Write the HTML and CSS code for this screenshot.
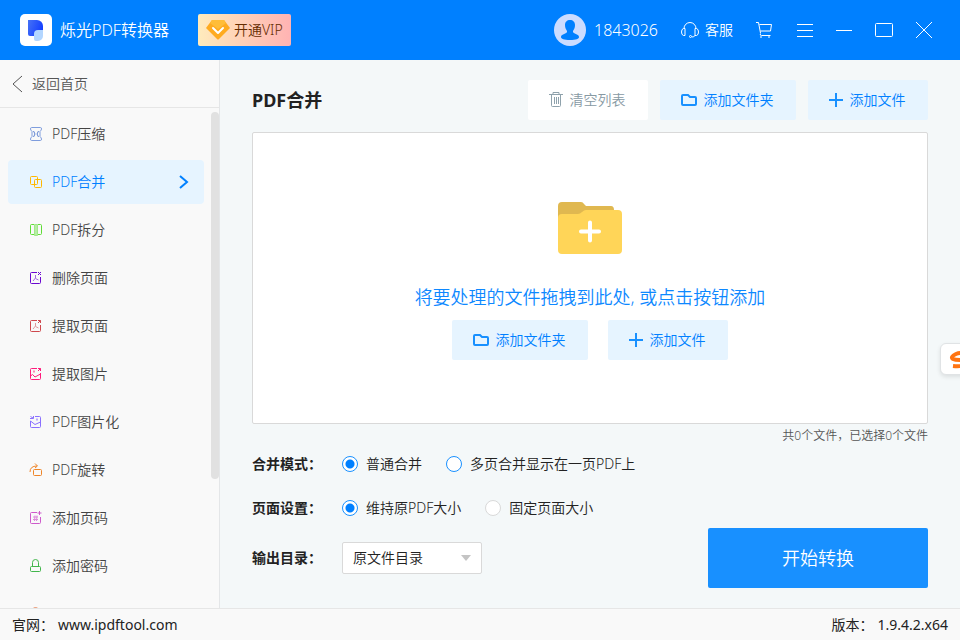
FILE: index.html
```html
<!DOCTYPE html>
<html lang="zh-CN">
<head>
    <meta charset="UTF-8">
    <meta name="viewport" content="width=device-width, initial-scale=1.0">
    <title>烁光PDF转换器</title>
    <link rel="stylesheet" href="styles.css">
</head>
<body>
    <header class="topbar">
        <svg class="logo" width="32" height="32" viewBox="0 0 32 32">
            <defs>
                <linearGradient id="logoBlue" x1="0" y1="0" x2="1" y2="0.4">
                    <stop offset="0" stop-color="#4672f5"/>
                    <stop offset="1" stop-color="#1440ff"/>
                </linearGradient>
            </defs>
            <rect width="32" height="32" rx="5" fill="#fff"/>
            <path d="M8 6h9a6 6 0 0 1 6 6v4a6 6 0 0 1-6 6H10a2 2 0 0 1-2-2z" fill="url(#logoBlue)"/>
            <path d="M14 20a4 4 0 0 1 4-4h5v6a5 5 0 0 1-5 5h-2a2 2 0 0 1-2-2z" fill="#b3d6ff"/>
        </svg>
        <span class="app-name">烁光PDF转换器</span>
        <button type="button" class="vip">
            <svg width="24" height="22" viewBox="0 0 24 22">
                <path d="M6 1h12l6 8-11 11q-1 1-2 0L0 9z" fill="#ffab1f"/>
                <path d="M6 1h12l2 3-8 6-8-6z" fill="#ffbd38"/>
                <path d="M7 9l5 5 5-5" fill="none" stroke="#fff" stroke-width="2" stroke-linecap="round" stroke-linejoin="round"/>
            </svg>
            开通VIP
        </button>
        <div class="top-actions">
            <a href="#" class="user">
                <svg width="32" height="32" viewBox="0 0 32 32">
                    <circle cx="16" cy="16" r="16" fill="#ccdcff"/>
                    <path d="M16 6c3 0 5 2 5 5 0 3-1 4-2 6v1c1 2 6 2 6 5 0 2-3 3-9 3s-9-1-9-3c0-3 5-3 6-5v-1c-1-2-2-3-2-6 0-3 2-5 5-5z" fill="#0080ff"/>
                </svg>
                1843026
            </a>
            <a href="#" class="service">
                <svg width="18" height="16" viewBox="0 0 18 16" fill="none" stroke="#fff" stroke-width="1">
                    <path d="M3 6.500a6 6 0 0 1 12 0M3 6.500H2.500Q.5 7 .5 10t2 3.500H4v-7zM15 6.500h.5q2 .5 2 3.500t-2 3.500H14v-7zM14 13.500q-1 1.500-3 1.500"/>
                    <circle cx="9.500" cy="14.500" r="1"/>
                </svg>
                客服
            </a>
            <button type="button" aria-label="购物车">
                <svg width="18" height="16" viewBox="0 0 18 16" fill="none" stroke="#fff">
                    <path d="M0 .5h2.500l2 10.500M3.500 2.500h12L14.500 9H4.500M4.500 11.500q-1 2 1 2h9"/>
                    <path d="M4 15h2M12 15h2"/>
                </svg>
            </button>
            <button type="button" aria-label="菜单">
                <svg width="16" height="16" viewBox="0 0 16 16" stroke="#fff"><path d="M0 2.500h16M0 8.500h16M0 14.500h16"/></svg>
            </button>
            <button type="button" aria-label="最小化">
                <svg width="16" height="16" viewBox="0 0 16 16" stroke="#fff"><path d="M0 8.500h16"/></svg>
            </button>
            <button type="button" aria-label="最大化">
                <svg width="18" height="16" viewBox="0 0 18 16" fill="none" stroke="#fff"><rect x=".5" y="1.500" width="17" height="13" rx="1"/></svg>
            </button>
            <button type="button" aria-label="关闭">
                <svg width="16" height="16" viewBox="0 0 16 16" stroke="#fff"><path d="M0 0l16 16M16 0L0 16"/></svg>
            </button>
        </div>
    </header>

    <div class="content">
        <aside class="sidebar">
            <a href="#" class="back">
                <svg width="12" height="18" viewBox="0 0 12 18" fill="none" stroke="#555"><path d="M10 1L1 9l9 8"/></svg>
                返回首页
            </a>
            <div class="scroll-area">
                <nav class="menu">
                    <a href="#" class="menu-item">
                        <svg width="14" height="14" viewBox="0 0 14 14" fill="none" stroke="#5b80d0">
                            <path d="M2.500.5h9q1 0 1 1.500 0 1-1.500 2.500V9.500q1.500 1.500 1.500 2.500 0 1.500-1 1.500h-9q-1 0-1-1.500 0-1 1.500-2.500V4.500Q1.500 3 1.500 2 1.500.5 2.500.5z" stroke="#7f9ddd"/>
                            <path d="M4.500 4L6 7l-1.500 3M9.500 4L8 7l1.500 3"/>
                        </svg>
                        PDF压缩
                    </a>
                    <a href="#" class="menu-item active">
                        <svg width="14" height="14" viewBox="0 0 14 14" fill="none" stroke="#ffb800">
                            <rect x="1.500" y="1.500" width="7" height="8" rx="1"/>
                            <rect x="5.500" y="4.500" width="7" height="8" rx="1"/>
                        </svg>
                        PDF合并
                        <svg class="arrow" width="10" height="14" viewBox="0 0 10 14" fill="none" stroke="#0080ff" stroke-width="2"><path d="M1 1l7 6-7 6"/></svg>
                    </a>
                    <a href="#" class="menu-item">
                        <svg width="14" height="14" viewBox="0 0 14 14" fill="none" stroke="#5fdc35">
                            <path d="M5 1.500H2.500q-1 0-1 1v8q0 1 1 1H5"/>
                            <path d="M5.500 1.500h3v11h-3z" fill="#b5efa4" stroke="#a0e888"/>
                            <path d="M9 1.500h2.500q1 0 1 1v8q0 1-1 1H9"/>
                        </svg>
                        PDF拆分
                    </a>
                    <a href="#" class="menu-item">
                        <svg width="14" height="14" viewBox="0 0 14 14" fill="none" stroke="#6b08d0">
                            <path d="M8 1.500H2.500q-1 0-1 1v9q0 1 1 1h8q1 0 1-1V6"/>
                            <path d="M9 1l3 3M12 1L9 4"/>
                            <path d="M6.500 4v3L4 10M6.500 7.500l3 1.500" stroke="#a568e4"/>
                        </svg>
                        删除页面
                    </a>
                    <a href="#" class="menu-item">
                        <svg width="14" height="14" viewBox="0 0 14 14" fill="none" stroke="#cf484d">
                            <path d="M8 1.500H2.500q-1 0-1 1v9q0 1 1 1h8q1 0 1-1V6"/>
                            <path d="M9 1.500h2.500V4M11.500 1.500L9 4"/>
                            <path d="M6.500 4v3L4 10M6.500 7.500l3 1.500" stroke="#e09a9c"/>
                        </svg>
                        提取页面
                    </a>
                    <a href="#" class="menu-item">
                        <svg width="14" height="14" viewBox="0 0 14 14" fill="none" stroke="#ff1c7c">
                            <path d="M8 1.500H2.500q-1 0-1 1v9q0 1 1 1h8q1 0 1-1V6"/>
                            <path d="M9 1.500h2.500V4M11.500 1.500L9 4M1.500 9l2-1.500L6 10l5.500-3"/>
                            <path d="M4 4.500h2" stroke="#ff85b8" stroke-width="2"/>
                        </svg>
                        提取图片
                    </a>
                    <a href="#" class="menu-item">
                        <svg width="14" height="14" viewBox="0 0 14 14" fill="none" stroke="#8a70ff">
                            <path d="M6 1.500h4.500q1 0 1 1v9q0 1-1 1h-8q-1 0-1-1V6"/>
                            <path d="M1 3.500h3.500V1M1.500 1.500L4 3M1.500 6L6 9.500 11.500 7"/>
                            <path d="M7 4.500h2" stroke="#b9aaff" stroke-width="2"/>
                        </svg>
                        PDF图片化
                    </a>
                    <a href="#" class="menu-item">
                        <svg width="14" height="14" viewBox="0 0 14 14" fill="none" stroke="#ef8528">
                            <rect x="4.500" y="6.500" width="8" height="6" rx="1"/>
                            <path d="M1 9q0-6 7-6M6 .5L8.500 3 6 5"/>
                        </svg>
                        PDF旋转
                    </a>
                    <a href="#" class="menu-item">
                        <svg width="14" height="14" viewBox="0 0 14 14" fill="none" stroke="#ce5bcb">
                            <path d="M8 1.500H2.500q-1 0-1 1v9q0 1 1 1h8q1 0 1-1V6"/>
                            <path d="M10.500 0v4M8.500 2h4"/>
                            <path d="M6 4.500L5.500 10M8 4.500L7.500 10M4 6h5M4 8.500h5" stroke="#dc8ada"/>
                        </svg>
                        添加页码
                    </a>
                    <a href="#" class="menu-item">
                        <svg width="14" height="14" viewBox="0 0 14 14" fill="none" stroke="#42b64c">
                            <rect x="1.500" y="7.500" width="10" height="5" rx="1"/>
                            <path d="M3.500 7V3.500a3 3 0 0 1 6 0V7"/>
                        </svg>
                        添加密码
                    </a>
                    <a href="#" class="menu-item" aria-label="解除密码">
                        <svg width="14" height="14" viewBox="0 0 14 14" fill="none" stroke="#e88a60">
                            <rect x="1.500" y="7.500" width="10" height="5" rx="1"/>
                            <path d="M3.500 7V3.500a3 3 0 0 1 6 0"/>
                        </svg>
                    </a>
                </nav>
                <div class="scrollbar"><div class="thumb"></div></div>
            </div>
        </aside>

        <main class="main">
            <div class="main-head">
                <h1>PDF合并</h1>
                <button type="button" class="btn btn-clear">
                    <svg width="14" height="16" viewBox="0 0 14 16" fill="none" stroke="#8fa2ac">
                        <path d="M0 2.500h14M4 2V.5h6V2M2.500 3v10.500q0 1 1 1h7q1 0 1-1V3M5.500 5v7M7.500 5v7M9.500 5v7"/>
                    </svg>
                    清空列表
                </button>
                <button type="button" class="btn btn-folder">
                    <svg width="16" height="14" viewBox="0 0 16 14" fill="none" stroke="#1890ff" stroke-width="2">
                        <path d="M2 2h5l2 2h5q1 0 1 1v6q0 1-1 1H2q-1 0-1-1V3q0-1 1-1z"/>
                    </svg>
                    添加文件夹
                </button>
                <button type="button" class="btn">
                    <svg width="14" height="14" viewBox="0 0 14 14" stroke="#1890ff" stroke-width="2"><path d="M0 7h14M7 0v14"/></svg>
                    添加文件
                </button>
            </div>

            <section class="drop-zone">
                <svg width="64" height="52" viewBox="0 0 64 52">
                    <path d="M4 0h19q2 0 3 2l2 2h25q3 0 3 4v8H0V4q0-4 4-4z" fill="#e0b850"/>
                    <path d="M4 12h16q2 0 4-2t4-2h32q4 0 4 4v36q0 4-4 4H4q-4 0-4-4V16q0-4 4-4z" fill="#ffd558"/>
                    <path d="M23 29.500h18M32 20.500v18" stroke="#fff" stroke-width="4" stroke-linecap="round"/>
                </svg>
                <p>将要处理的文件拖拽到此处, 或点击按钮添加</p>
                <div class="drop-buttons">
                    <button type="button" class="btn btn-folder">
                        <svg width="16" height="14" viewBox="0 0 16 14" fill="none" stroke="#1890ff" stroke-width="2">
                            <path d="M2 2h5l2 2h5q1 0 1 1v6q0 1-1 1H2q-1 0-1-1V3q0-1 1-1z"/>
                        </svg>
                        添加文件夹
                    </button>
                    <button type="button" class="btn">
                        <svg width="14" height="14" viewBox="0 0 14 14" stroke="#1890ff" stroke-width="2"><path d="M0 7h14M7 0v14"/></svg>
                        添加文件
                    </button>
                </div>
            </section>
            <div class="count">共0个文件，已选择0个文件</div>

            <form class="settings">
                <div class="options">
                    <div class="option-row" role="radiogroup" aria-labelledby="modeLabel">
                        <span class="option-label" id="modeLabel">合并模式：</span>
                        <label class="radio"><input type="radio" name="mode" checked>普通合并</label>
                        <label class="radio"><input type="radio" name="mode" class="hovered">多页合并显示在一页PDF上</label>
                    </div>
                    <div class="option-row" role="radiogroup" aria-labelledby="pageLabel">
                        <span class="option-label" id="pageLabel">页面设置：</span>
                        <label class="radio"><input type="radio" name="page" checked>维持原PDF大小</label>
                        <label class="radio"><input type="radio" name="page">固定页面大小</label>
                    </div>
                    <div class="option-row output">
                        <label class="option-label" for="outputDir">输出目录：</label>
                        <select id="outputDir">
                            <option>原文件目录</option>
                            <option>自定义目录</option>
                        </select>
                    </div>
                </div>
                <button type="button" class="start">开始转换</button>
            </form>
        </main>
    </div>

    <footer class="footer">
        <span>官网：</span>
        <a href="#">www.ipdftool.com</a>
        <span class="version">版本：</span>
        <span>1.9.4.2.x64</span>
    </footer>

    <!-- 输入法浮标 -->
    <div class="ime">
        <svg width="20" height="18" viewBox="0 0 20 18" fill="none" stroke="#ff7411" stroke-width="4">
            <path d="M17 3Q12 1 7 3 1 6 4 8q2 1 7 1 7 1 5 4-2 3-12 2"/>
        </svg>
    </div>
</body>
</html>
```
FILE: styles.css
```css
* {
    box-sizing: border-box;
}
body {
    margin: 0;
    height: 100vh;
    display: flex;
    flex-direction: column;
    overflow: hidden;
    position: relative;
    font-family: "Noto Sans", "Noto Sans CJK SC", sans-serif;
    font-size: 14px;
    font-weight: 350;
    line-height: 20px;
    color: #222;
    background-color: #f4f8f9;
}
a {
    color: inherit;
    text-decoration: none;
}
button, select, input {
    font: inherit;
    color: inherit;
    margin: 0;
}
button {
    border: none;
    padding: 0;
    background: none;
    cursor: pointer;
}
svg {
    display: block;
    flex-shrink: 0;
}

/* header */
.topbar {
    height: 60px;
    flex-shrink: 0;
    display: flex;
    align-items: center;
    padding: 0 28px 0 20px;
    background-color: #0080ff;
    color: #fff;
}
.app-name {
    margin-left: 8px;
    font-size: 16px;
}
.vip {
    display: flex;
    align-items: center;
    gap: 4px;
    height: 32px;
    margin-left: 29px;
    padding: 0 8px;
    border-radius: 2px;
    background: linear-gradient(90deg, #ffebbc, #ffb3b3);
    color: #642c00;
}
.top-actions {
    display: flex;
    align-items: center;
    gap: 23px;
    margin-left: auto;
}
.user, .service {
    display: flex;
    align-items: center;
    gap: 8px;
}
.user {
    font-size: 16px;
}
.service {
    gap: 6px;
}

/* sidebar */
.content {
    flex: 1;
    min-height: 0;
    display: flex;
}
.sidebar {
    width: 220px;
    flex-shrink: 0;
    display: flex;
    flex-direction: column;
    border-right: 1px solid #e4e6e8;
    background-color: #f9f9f9;
}
.back {
    display: flex;
    align-items: center;
    gap: 8px;
    height: 48px;
    flex-shrink: 0;
    padding-left: 12px;
    border-bottom: 1px solid #e6e6e6;
    color: #555;
}
.scroll-area {
    flex: 1;
    min-height: 0;
    display: flex;
    padding-top: 4px;
    overflow: hidden;
}
.menu {
    flex: 1;
    display: flex;
    flex-direction: column;
    gap: 4px;
    padding: 0 7px 0 8px;
}
.menu-item {
    display: flex;
    align-items: center;
    gap: 9px;
    height: 44px;
    flex-shrink: 0;
    padding: 0 15px 0 21px;
    border-radius: 4px;
    color: #444;
}
.menu-item.active {
    background-color: #e6f4ff;
    color: #0080ff;
}
.arrow {
    margin-left: auto;
}
.scrollbar {
    width: 8px;
}
.thumb {
    height: 74%;
    border-radius: 4px;
    background-color: #e1e1e1;
}

/* main */
.main {
    flex: 1;
    min-width: 0;
    display: flex;
    flex-direction: column;
    padding: 20px 32px;
}
.main-head {
    display: flex;
    align-items: center;
    gap: 12px;
    margin-bottom: 12px;
}
h1 {
    margin: 0 auto 0 0;
    font-size: 18px;
    line-height: 24px;
}
.btn {
    display: flex;
    align-items: center;
    justify-content: center;
    gap: 7px;
    width: 120px;
    height: 40px;
    padding-right: 2px;
    border-radius: 2px;
    background-color: #e6f4ff;
    color: #0080ff;
}
.btn-folder {
    width: 136px;
}
.btn-clear {
    background-color: #fff;
    color: #8799a3;
}
.drop-zone {
    flex: 1;
    display: flex;
    flex-direction: column;
    align-items: center;
    justify-content: center;
    padding-top: 6px;
    border: 1px solid #d9d9d9;
    border-radius: 2px;
    background-color: #fff;
}
.drop-zone p {
    margin: 30px 0 10px;
    font-size: 18px;
    line-height: 26px;
    color: #0d88ff;
}
.drop-buttons {
    display: flex;
    gap: 20px;
}
.count {
    font-size: 12px;
    line-height: 24px;
    text-align: right;
    color: #555;
}
.settings {
    display: flex;
    align-items: flex-end;
    justify-content: space-between;
}
.options {
    display: flex;
    flex-direction: column;
    gap: 12px;
    padding-bottom: 14px;
}
.option-row {
    display: flex;
    align-items: center;
    gap: 24px;
    height: 32px;
}
.option-row.output {
    margin-top: 6px;
}
.option-label {
    width: 66px;
    white-space: nowrap;
    font-weight: bold;
}
.radio {
    display: flex;
    align-items: center;
    gap: 8px;
}
.radio input {
    appearance: none;
    width: 16px;
    height: 16px;
    border: 1px solid #d9d9d9;
    border-radius: 50%;
    background-color: #fff;
}
.radio input.hovered {
    border-color: #1890ff;
}
.radio input:checked {
    border-color: #1890ff;
    background-image: radial-gradient(circle, #0080ff 4px, transparent 5px);
}
select {
    appearance: none;
    width: 140px;
    height: 32px;
    padding: 0 10px;
    border: 1px solid #d9d9d9;
    border-radius: 2px;
    background: #fff url("data:image/svg+xml,%3Csvg xmlns='http://www.w3.org/2000/svg' width='10' height='6'%3E%3Cpath d='M0 0h10L5 6z' fill='%23c4c4c4'/%3E%3C/svg%3E") no-repeat right 10px center;
}
.start {
    width: 220px;
    height: 60px;
    border-radius: 2px;
    background-color: #1890ff;
    color: #fff;
    font-size: 18px;
}

/* footer */
.footer {
    display: flex;
    align-items: center;
    gap: 4px;
    height: 32px;
    flex-shrink: 0;
    padding: 0 12px;
    border-top: 1px solid #e6e6e6;
    background-color: #f9f9f9;
    font-weight: 400;
}
.version {
    margin-left: auto;
}

.ime {
    position: absolute;
    top: 343px;
    right: -12px;
    width: 32px;
    height: 32px;
    padding: 7px 8px;
    border: 1px solid #e0e3e5;
    border-radius: 6px;
    background-color: #fff;
    box-shadow: 0 2px 4px rgba(0, 0, 0, 0.1);
}
```
